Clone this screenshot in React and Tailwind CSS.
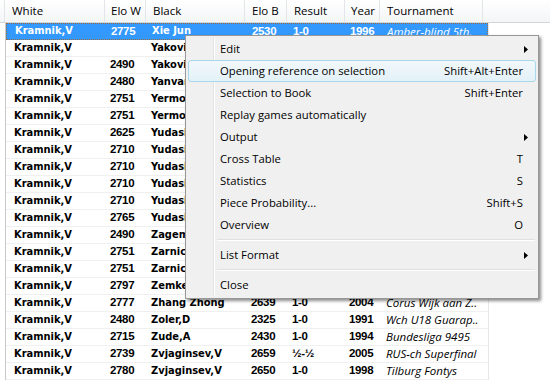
import React from 'react';

const cols = [
  { key: 'white', label: 'White', w: 'w-[100px]', hp: 'pl-[7px]', bp: 'pl-[8px]' },
  { key: 'eloW', label: 'Elo W', w: 'w-[41px]', hp: 'pl-[6px]', bp: 'pl-[5px]' },
  { key: 'black', label: 'Black', w: 'w-[99px]', hp: 'pl-[7px]', bp: 'pl-[5px]' },
  { key: 'eloB', label: 'Elo B', w: 'w-[42px]', hp: 'pl-[7px]', bp: 'pl-[6px]' },
  { key: 'result', label: 'Result', w: 'w-[58px]', hp: 'pl-[7px]', bp: 'pl-[5px]' },
  { key: 'year', label: 'Year', w: 'w-[35px]', hp: 'pl-[6px]', bp: 'pl-[4px]' },
  { key: 'event', label: 'Tournament', w: 'w-[103px]', hp: 'pl-[7px]', bp: 'pl-[6px]' },
];

const games = [
  ['Kramnik,V', '2775', 'Xie Jun', '2530', '1-0', '1996', 'Amber-blind 5th.'],
  ['Kramnik,V', '', 'Yakovich,Y', '2580', '1-0', '1993', 'Moscow Open'],
  ['Kramnik,V', '2490', 'Yakovich,Y', '2535', '1-0', '1990', 'URS-ch U26'],
  ['Kramnik,V', '2480', 'Yanvarjov,I', '2480', '1-0', '1989', 'RSFSR-ch'],
  ['Kramnik,V', '2751', 'Yermolinsky', '2625', '1-0', '1996', 'Olympiad'],
  ['Kramnik,V', '2751', 'Yermolinsky', '2625', '½-½', '1996', 'Olympiad'],
  ['Kramnik,V', '2625', 'Yudasin,L', '2605', '½-½', '1991', 'Moscow GMA'],
  ['Kramnik,V', '2710', 'Yudasin,L', '2625', '1-0', '1993', 'PCA Qual'],
  ['Kramnik,V', '2710', 'Yudasin,L', '2625', '½-½', '1993', 'PCA Qual'],
  ['Kramnik,V', '2710', 'Yudasin,L', '2625', '1-0', '1994', 'PCA Qual'],
  ['Kramnik,V', '2710', 'Yudasin,L', '2625', '½-½', '1994', 'PCA Qual'],
  ['Kramnik,V', '2765', 'Yudasin,L', '2620', '1-0', '1995', 'Dortmund'],
  ['Kramnik,V', '2490', 'Zagema,R', '2300', '1-0', '1990', 'Open'],
  ['Kramnik,V', '2751', 'Zarnicki,P', '2510', '1-0', '1996', 'Olympiad'],
  ['Kramnik,V', '2751', 'Zarnicki,P', '2510', '1-0', '1996', 'Olympiad'],
  ['Kramnik,V', '2797', 'Zemke,T', '2400', '1-0', '2001', 'Simul'],
  ['Kramnik,V', '2777', 'Zhang Zhong', '2639', '1-0', '2004', 'Corus Wijk aan Z..'],
  ['Kramnik,V', '2480', 'Zoler,D', '2325', '1-0', '1991', 'Wch U18 Guarap..'],
  ['Kramnik,V', '2715', 'Zude,A', '2430', '1-0', '1994', 'Bundesliga 9495'],
  ['Kramnik,V', '2739', 'Zvjaginsev,V', '2659', '½-½', '2005', 'RUS-ch Superfinal'],
  ['Kramnik,V', '2780', 'Zvjaginsev,V', '2650', '1-0', '1998', 'Tilburg Fontys'],
];

const uiFont = "font-['Open_Sans','Noto_Sans',sans-serif]";
const nameFont = "font-['DejaVu_Sans_Condensed','DejaVu_Sans',sans-serif] font-bold text-[11px]";
const numFont = "font-['Liberation_Sans','Arial',sans-serif] font-bold text-[11.5px] tracking-[-0.35px]";

const menu = [
  { label: 'Edit', sub: true },
  { label: 'Opening reference on selection', key: 'Shift+Alt+Enter', hot: true },
  { label: 'Selection to Book', key: 'Shift+Enter' },
  { label: 'Replay games automatically' },
  { label: 'Output', sub: true },
  { label: 'Cross Table', key: 'T' },
  { label: 'Statistics', key: 'S' },
  { label: 'Piece Probability...', key: 'Shift+S' },
  { label: 'Overview', key: 'O' },
  { sep: true },
  { label: 'List Format', sub: true },
  { sep: true },
  { label: 'Close' },
];

function Arrow() {
  return (
    <svg width="4" height="7" viewBox="0 0 4 7" className="absolute right-[7px] top-[7px]">
      <path d="M0 0 L4 3.5 L0 7 Z" fill="#000" />
    </svg>
  );
}

function ContextMenu() {
  return (
    <div className={`absolute left-[185px] top-[35px] w-[354px] bg-[#f0f0f0] border border-[#979797] shadow-[2px_2px_3px_rgba(0,0,0,0.45)] py-[2px] px-[2px] ${uiFont} text-[11.3px] text-black`}>
      <div className="absolute left-[27px] top-[2px] bottom-[2px] w-[2px] border-l border-[#e2e3e3] border-r border-r-white" />
      {menu.map((m, i) =>
        m.sep ? (
          <div key={i} className="h-[8px] flex items-center pl-[29px] pr-[1px]">
            <div className="w-full h-[2px] border-t border-[#e0e0e0] border-b border-b-white" />
          </div>
        ) : (
          <div
            key={i}
            className={`relative h-[22px] flex items-center pl-[31px] pr-[12px] rounded-[3px] border ${
              m.hot ? 'border-[#a8d8ea] bg-gradient-to-b from-[#f1f8fb] to-[#e3f1f8]' : 'border-transparent'
            }`}
          >
            <span className="flex-1 whitespace-nowrap">{m.label}</span>
            {m.key && <span className="whitespace-nowrap">{m.key}</span>}
            {m.sub && <Arrow />}
          </div>
        )
      )}
    </div>
  );
}

export default function App() {
  return (
    <div className="relative w-[550px] h-[382px] bg-white overflow-hidden">
      {/* Column header */}
      <div className={`flex h-[23px] bg-gradient-to-b from-white to-[#f4f5f7] border-b border-[#d5d5d5] ${uiFont} text-[11.5px] text-black`}>
        <div className="w-[5px] border-r border-[#e3e5e8]" />
        {cols.map((c) => (
          <div key={c.key} className={`${c.w} ${c.hp} flex items-center border-r border-[#e3e5e8] whitespace-nowrap`}>
            {c.label}
          </div>
        ))}
        <div className="flex-1" />
      </div>

      {/* Rows */}
      <div className="w-[484px] border-l border-[#c8c8c8] ml-[5px] border-r border-r-[#e8e8e8] -mt-px">
        {games.map((g, r) => {
          const sel = r === 0;
          return (
            <div
              key={r}
              className={`flex h-[17px] items-center ${
                sel ? 'bg-[#3399ff] text-white border border-dotted border-[#9a6a3a] mt-px' : 'text-black border-b border-[#f0f0f0]'
              }`}
            >
              {cols.map((c, ci) => {
                const isNum = ci === 1 || ci === 3 || ci === 4 || ci === 5;
                const f = ci === 6 ? `${uiFont} italic text-[11.5px]` : isNum ? numFont : nameFont;
                return (
                  <div key={c.key} className={`${ci === 0 ? 'w-[99px]' : c.w} ${c.bp} ${f} whitespace-nowrap overflow-hidden`}>
                    {g[ci]}
                  </div>
                );
              })}
            </div>
          );
        })}
      </div>

      <ContextMenu />
    </div>
  );
}
